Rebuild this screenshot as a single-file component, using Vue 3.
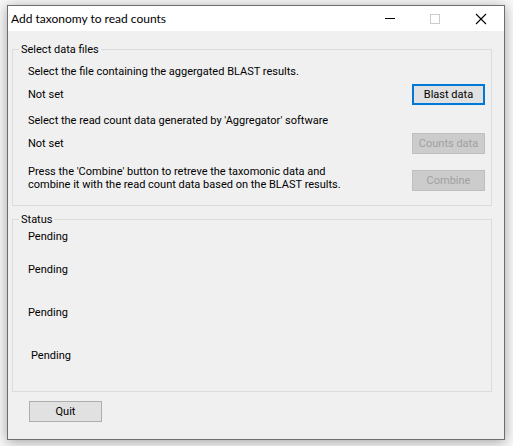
<script setup>
const stages = ['Pending', 'Pending', 'Pending', 'Pending']
</script>

<template>
  <main class="window">
    <header class="titlebar">
      <h1 class="title">Add taxonomy to read counts</h1>
      <button class="caption" type="button" aria-label="Minimize">
        <svg width="12" height="12" viewBox="0 0 12 12" shape-rendering="crispEdges"><path d="M2 5.5H12" stroke="#000" /></svg>
      </button>
      <button class="caption" type="button" aria-label="Maximize" disabled>
        <svg width="12" height="12" viewBox="0 0 12 12" shape-rendering="crispEdges"><rect x="1.5" y="1.5" width="9" height="9" fill="none" stroke="#ccc" /></svg>
      </button>
      <button class="caption" type="button" aria-label="Close">
        <svg width="12" height="12" viewBox="0 0 12 12"><path d="M1 1L11 11M11 1L1 11" stroke="#000" stroke-width="1.1" /></svg>
      </button>
    </header>

    <div class="body">
      <fieldset class="group">
        <legend>Select data files</legend>
        <div class="files">
          <p>Select the file containing the aggergated BLAST results.</p>
          <div class="row">
            <span>Not set</span>
            <button class="btn focused" type="button">Blast data</button>
          </div>
          <p class="next">Select the read count data generated by 'Aggregator' software</p>
          <div class="row">
            <span>Not set</span>
            <button class="btn" type="button" disabled>Counts data</button>
          </div>
          <div class="row combine">
            <span>Press the 'Combine' button to retreve the taxomonic data and<br />combine it with the read count data based on the BLAST results.</span>
            <button class="btn" type="button" disabled>Combine</button>
          </div>
        </div>
      </fieldset>

      <fieldset class="group status">
        <legend>Status</legend>
        <ul class="stages">
          <li v-for="(stage, i) in stages" :key="i">{{ stage }}</li>
        </ul>
      </fieldset>

      <button class="btn quit" type="button">Quit</button>
    </div>
  </main>
</template>

<style>
body {
  background: #f8f8f8;
}
</style>

<style scoped>
.window {
  margin: 5px 8px 6px 7px;
  border: 1px solid #6e6e6e;
  background: #f0f0f0;
  box-shadow: 0 2px 12px rgba(0, 0, 0, 0.35);
  font: 11px/13px Roboto, "Liberation Sans", Arial, sans-serif;
  color: #000;
}
.titlebar {
  display: flex;
  align-items: center;
  height: 25px;
  padding-left: 3px;
  background: #fff;
}
.title {
  flex: 1;
  margin: 0;
  font: 400 12px/24px Lato, "Segoe UI", sans-serif;
  white-space: nowrap;
}
.caption {
  display: flex;
  align-items: center;
  justify-content: center;
  width: 46px;
  height: 25px;
  padding: 0;
  border: 0;
  background: transparent;
}
.body {
  padding: 12px 12px 17px 4px;
}
.group {
  min-width: 0;
  margin: 0;
  padding: 0;
  border: 1px solid #dcdcdc;
}
.group legend {
  margin-left: 6px;
  padding: 0 2px;
}
.files {
  padding: 9px 6px 14px 15px;
}
p {
  margin: 0 0 6px;
}
.next {
  margin-top: 9px;
}
.row {
  display: flex;
  align-items: center;
  justify-content: space-between;
}
.combine {
  align-items: flex-end;
  margin-top: 11px;
}
.btn {
  flex: none;
  width: 73px;
  height: 21px;
  padding: 0;
  border: 1px solid #adadad;
  background: #e1e1e1;
  color: #000;
  font: inherit;
}
.btn.focused {
  border: 2px solid #0078d7;
}
.btn:disabled {
  border-color: #bfbfbf;
  background: #ccc;
  color: #a0a0a0;
}
.status {
  margin-top: 7px;
}
.stages {
  margin: 0;
  padding: 4px 15px 29px;
  list-style: none;
}
.stages li + li {
  margin-top: 30px;
}
.stages li:nth-child(2) {
  margin-top: 20px;
}
.stages li:last-child {
  padding-left: 3px;
}
.quit {
  display: block;
  margin: 9px 0 0 17px;
}
</style>
